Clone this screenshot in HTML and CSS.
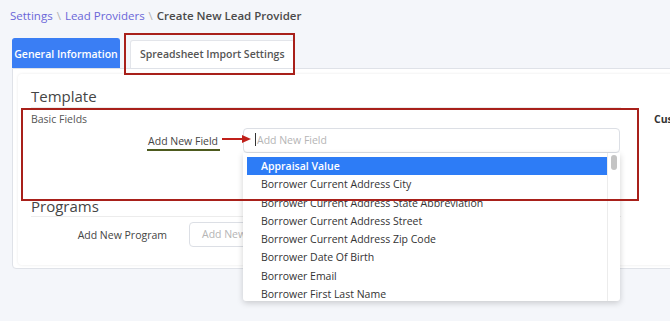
FILE: index.html
```html
<html>
<head>
    <meta charset="UTF-8">
    <title>Create New Lead Provider</title>
    <link rel="stylesheet" href="styles.css">
</head>
<body>
    <div class="crumbs">
        <a class="crumb-link">Settings</a>
        <span class="sep">\</span>
        <a class="crumb-link">Lead Providers</a>
        <span class="sep">\</span>
        <span class="crumb-current">Create New Lead Provider</span>
    </div>

    <div class="tabs">
        <div class="tab tab-active">General Information</div>
        <div class="tab">Spreadsheet Import Settings</div>
    </div>

    <div class="panel">
        <div class="card">
            <h2 class="section-title">Template</h2>
            <div class="template-cols">
                <div class="col-basic">
                    <div class="col-title">Basic Fields</div>
                    <div class="field-row">
                        <label class="field-label label-field">Add New Field</label>
                        <div class="picker">
                            <div class="input"><span class="caret"></span>Add New Field</div>
                            <div class="dropdown">
                                <ul class="options">
                                    <li class="option selected">Appraisal Value</li>
                                    <li class="option">Borrower Current Address City</li>
                                    <li class="option">Borrower Current Address State Abbreviation</li>
                                    <li class="option">Borrower Current Address Street</li>
                                    <li class="option">Borrower Current Address Zip Code</li>
                                    <li class="option">Borrower Date Of Birth</li>
                                    <li class="option">Borrower Email</li>
                                    <li class="option">Borrower First Last Name</li>
                                </ul>
                                <div class="scrollbar"><div class="thumb"></div></div>
                            </div>
                        </div>
                    </div>
                </div>
                <div class="col-custom">
                    <div class="col-title col-title-bold">Custom Fields</div>
                </div>
            </div>

            <h2 class="section-title programs-title">Programs</h2>
            <div class="field-row">
                <label class="field-label label-program">Add New Program</label>
                <div class="input input-program">Add New Program</div>
            </div>
        </div>
    </div>

    <!-- annotation marks -->
    <div class="mark mark-tab"></div>
    <div class="mark mark-fields"></div>
    <div class="mark-underline"></div>
    <svg class="mark-arrow" width="30" height="10" viewBox="0 0 30 10">
        <line x1="0" y1="5" x2="22" y2="5" stroke="#c0201a" stroke-width="2"/>
        <polygon points="20,1 29,5 20,9" fill="#c0201a"/>
    </svg>
</body>
</html>
```

FILE: styles.css
```css
html { overflow: hidden; }
body { margin: 0; padding: 8px 0 0 12px; width: 740px; height: 321px; background: #f4f6fa; font-family: "Open Sans", sans-serif; color: #444; position: relative; }

.crumbs { margin-left: -2px; height: 16px; line-height: 16px; font-size: 11.5px; display: flex; gap: 4px; }
.crumb-link { color: #6a66d8; }
.sep { color: #b3b3b3; }
.crumb-current { font-weight: 600; color: #4a4a4a; }

.tabs { display: flex; align-items: flex-end; margin-top: 14px; height: 30px; }
.tab { font-size: 10.5px; font-weight: 600; color: #555; background: #fff; border: 1px solid #e3e5ea; border-bottom: none; border-radius: 3px 3px 0 0; height: 27px; line-height: 27px; padding: 0 9px; margin-left: 10px; }
.tab-active { background: #3a7ef4; color: #fff; border-color: #3a7ef4; height: 30px; line-height: 30px; margin-left: 0; width: 108px; box-sizing: border-box; padding: 0; text-align: center; }

.panel { background: #fff; border: 1px solid #dfe2e8; border-radius: 0 4px 4px 4px; height: 201px; padding: 5px; box-sizing: border-box; }
.card { height: 191px; box-sizing: border-box; border-radius: 4px; box-shadow: 0 0 3px rgba(0, 0, 0, 0.09); padding: 12px 0 0 13px; }

.section-title { margin: 0; font-size: 15px; font-weight: 400; line-height: 20px; color: #454545; padding-bottom: 1px; border-bottom: 1px solid #ececec; width: 590px; }

.template-cols { display: flex; }
.col-basic { width: 623px; flex: none; }
.col-title { font-size: 10.5px; line-height: 14px; margin-top: 4px; color: #555; }
.col-title-bold { font-weight: 700; color: #333; }

.field-row { display: flex; align-items: center; margin-top: 2px; }
.field-label { font-size: 10.5px; color: #444; text-align: right; flex: none; }
.label-field { width: 187px; margin-right: 25px; }
.label-program { width: 136px; margin-right: 22px; }

.picker { position: relative; }
.input { width: 377px; height: 25px; box-sizing: border-box; border: 1px solid #dcdfe5; border-radius: 4px; font-size: 10.5px; line-height: 23px; color: #b5b5b5; padding-left: 11px; background: #fff; white-space: nowrap; overflow: hidden; }
.caret { display: inline-block; width: 1px; height: 13px; background: #333; vertical-align: -2px; margin-right: 1px; }
.input-program { width: 300px; padding-left: 12px; }

.programs-title { margin-top: 44px; line-height: 18px; }
.programs-title + .field-row { margin-top: 5px; }

.dropdown { position: absolute; top: 25px; left: 0; width: 377px; height: 148px; background: #fff; box-shadow: 0 2px 6px rgba(0, 0, 0, 0.18); border-radius: 0 0 3px 3px; display: flex; overflow: hidden; z-index: 2; }
.options { list-style: none; margin: 0; padding: 4px 0 0 4px; width: 360px; flex: none; }
.option { height: 18.3px; line-height: 18.3px; font-size: 10.5px; color: #333; padding-left: 14px; white-space: nowrap; }
.option.selected { background: #2d7cf6; color: #fff; font-weight: 600; }
.scrollbar { border-left: 1px solid #ececec; width: 12px; position: relative; }
.thumb { position: absolute; left: 3px; top: 2px; width: 6px; height: 15px; border-radius: 3px; background: #c4c4c4; }

.mark { position: absolute; border: 2px solid #a8201a; box-sizing: border-box; z-index: 3; }
.mark-tab { left: 124px; top: 33px; width: 171px; height: 42px; }
.mark-fields { left: 21px; top: 108px; width: 618px; height: 93px; }
.mark-underline { position: absolute; left: 147px; top: 149px; width: 73px; height: 2px; background: #4d5a1e; z-index: 3; }
.mark-arrow { position: absolute; left: 222px; top: 134px; z-index: 3; }
```
